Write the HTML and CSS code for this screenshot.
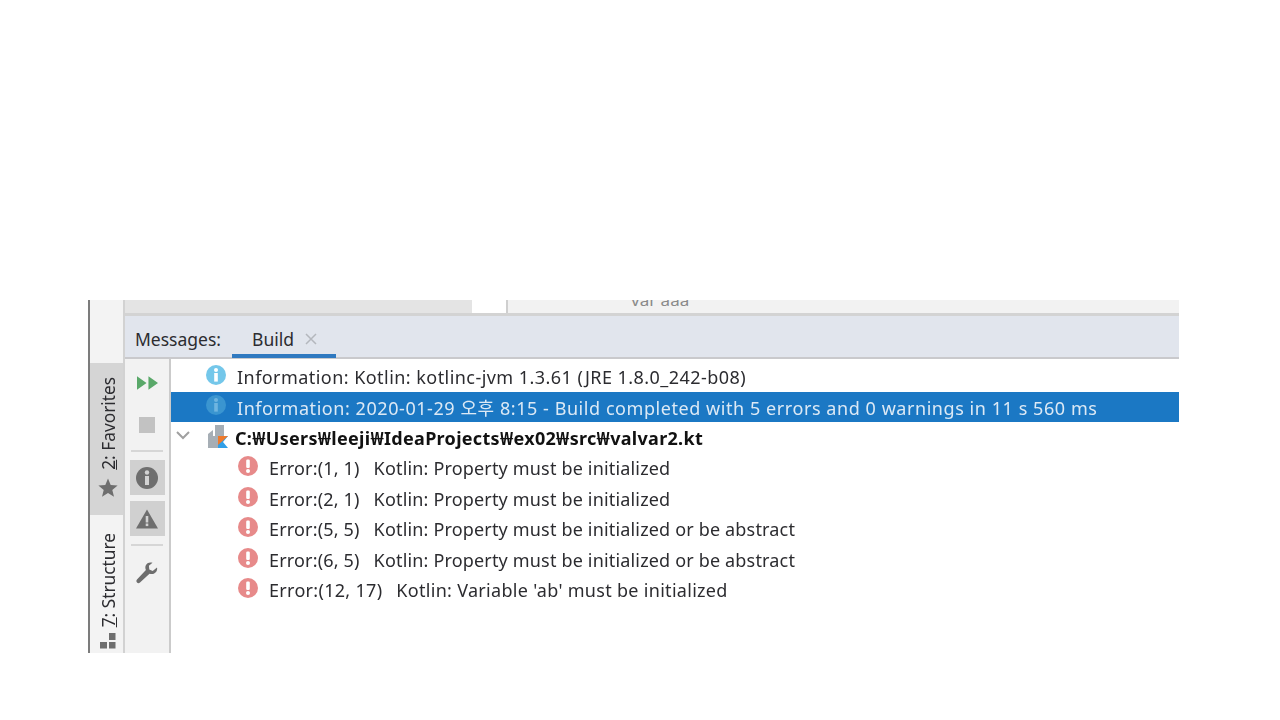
FILE: index.html
```html
<!DOCTYPE html>
<html lang="ko">
<head>
<meta charset="utf-8">
<title>Messages: Build</title>
<link rel="stylesheet" href="styles.css">
</head>
<body>
<svg class="defs" width="0" height="0" aria-hidden="true">
  <symbol id="err" viewBox="0 0 20 20"><circle cx="10" cy="10" r="10" fill="#e78a8a"/><rect x="8.200" y="3.600" width="3.600" height="8.400" rx="1.200" fill="#fff"/><circle cx="10" cy="15" r="2" fill="#fff"/></symbol>
  <symbol id="info" viewBox="0 0 20 20"><circle cx="10" cy="10" r="10" fill="currentColor"/><circle cx="10" cy="5" r="2" fill="var(--glyph, #fff)"/><rect x="8.200" y="8" width="3.600" height="8.600" fill="var(--glyph, #fff)"/></symbol>
</svg>
<div class="frame">
  <aside class="stripe">
    <div class="stripe-gap"></div>
    <div class="side-tab side-tab-active">
      <span class="side-label"><span class="mnemonic">2</span>: Favorites</span>
      <svg class="side-icon" viewBox="0 0 20 20"><path d="M10 .5l2.700 6.400 6.900.5-5.300 4.500 1.700 6.800L10 15l-6 3.700 1.700-6.800L.4 7.400l6.900-.5z" fill="#6e6e6e"/></svg>
    </div>
    <div class="side-tab side-tab-structure">
      <span class="side-label"><span class="mnemonic">7</span>: Structure</span>
      <svg class="side-icon side-icon-small" viewBox="0 0 16 16"><path d="M9 0h6.500v7H9zM0 9h7v6.500H0zM9 9h6.500v6.500H9z" fill="#6e6e6e"/></svg>
    </div>
  </aside>
  <div class="main">
    <div class="editor-strip">
      <div class="strip-left"></div>
      <div class="strip-gap"></div>
      <div class="strip-right"><span class="clipped-code">var aaa</span></div>
    </div>
    <div class="tabbar">
      <span class="tab-title">Messages:</span>
      <div class="tab"><span>Build</span><svg class="tab-close" viewBox="0 0 12 12"><path d="M1 1l10 10M11 1L1 11" stroke="#b4b7bd" stroke-width="1.500"/></svg></div>
    </div>
    <div class="content">
      <div class="tools">
        <svg class="tool-run" viewBox="0 0 22 14"><path d="M0 0l10 7-10 7zM12 0l10 7-10 7z" fill="#59a869"/></svg>
        <div class="tool-stop"></div>
        <div class="tool-sep tool-sep-a"></div>
        <div class="toggle"><svg class="tool-icon" viewBox="0 0 22 22"><circle cx="11" cy="11" r="11" fill="#6e6e6e"/><circle cx="11" cy="5.500" r="2.200" fill="#d2d2d2"/><rect x="9" y="9" width="4" height="9" fill="#d2d2d2"/></svg></div>
        <div class="toggle toggle-b"><svg class="tool-icon" viewBox="0 0 22 22"><path d="M11 1.500L22 20.500H0z" fill="#6e6e6e"/><rect x="9.700" y="8" width="2.600" height="6.500" fill="#d2d2d2"/><rect x="9.700" y="15.500" width="2.600" height="2.600" fill="#d2d2d2"/></svg></div>
        <div class="tool-sep tool-sep-b"></div>
        <svg class="tool-wrench" viewBox="0 0 22 22"><path d="M21 5.500l-4.300 3.400-3.400-1.500-.4-3.600L16.500.8C13.800-.2 10.500 1 9.600 3.800c-.5 1.500-.3 3 .3 4.300L1 17.500c-.9 1-.8 2.200 0 3s2 .9 3 0l9.500-8.800c1.400.5 2.900.6 4.300 0 2.500-1 3.900-3.600 3.200-6.200z" fill="#6e6e6e"/></svg>
      </div>
      <div class="list">
        <div class="row row-info row-plain"><svg class="msg-icon icon-info"><use href="#info"/></svg><span>Information: Kotlin: kotlinc-jvm 1.3.61 (JRE 1.8.0_242-b08)</span></div>
        <div class="row row-info row-selected"><svg class="msg-icon icon-info-dim"><use href="#info"/></svg><span>Information: 2020-01-29 오후 8:15 - Build completed with 5 errors and 0 warnings in 11 s 560 ms</span></div>
        <div class="row row-file">
          <svg class="chevron" viewBox="0 0 14 9"><path d="M1 1l6 6 6-6" fill="none" stroke="#a0a0a0" stroke-width="2"/></svg>
          <svg class="file-icon" viewBox="0 0 20 23"><path d="M0 23V9l5-4v6H7V0h9v12h-5v11z" fill="#a6aeb5"/><path d="M10 23V11h10l-5 6 5 6z" fill="#2f9fe8"/><path d="M10 11h10l-5.500 5-4.500 4z" fill="#ee7a2c"/></svg>
          <span>C:₩Users₩leeji₩IdeaProjects₩ex02₩src₩valvar2.kt</span>
        </div>
        <div class="row row-error"><svg class="msg-icon"><use href="#err"/></svg><span class="pos">Error:(1, 1)</span><span>Kotlin: Property must be initialized</span></div>
        <div class="row row-error"><svg class="msg-icon"><use href="#err"/></svg><span class="pos">Error:(2, 1)</span><span>Kotlin: Property must be initialized</span></div>
        <div class="row row-error"><svg class="msg-icon"><use href="#err"/></svg><span class="pos">Error:(5, 5)</span><span>Kotlin: Property must be initialized or be abstract</span></div>
        <div class="row row-error"><svg class="msg-icon"><use href="#err"/></svg><span class="pos">Error:(6, 5)</span><span>Kotlin: Property must be initialized or be abstract</span></div>
        <div class="row row-error row-last"><svg class="msg-icon"><use href="#err"/></svg><span class="pos">Error:(12, 17)</span><span>Kotlin: Variable 'ab' must be initialized</span></div>
      </div>
    </div>
  </div>
</div>
</body>
</html>
```
FILE: styles.css
```css
* { box-sizing: border-box; }
html, body { margin: 0; height: 100%; background: #fff; }
body {
  padding: 300px 101px 67px 88px;
  font-family: "Noto Sans", "Noto Sans CJK KR", sans-serif;
  font-size: 18px;
  color: #2c2c30;
  overflow: hidden;
}
.defs { position: absolute; }
.frame { display: flex; height: 353px; border-left: 2px solid #7c7c7c; filter: blur(0.35px); }

.stripe { width: 33px; flex: none; display: flex; flex-direction: column; background: #f3f3f3; }
.stripe-gap { height: 63px; flex: none; }
.side-tab { display: flex; flex-direction: column; align-items: center; gap: 8px; padding: 14px 0 0 3px; overflow: hidden; flex: 1; }
.side-tab-active { flex: none; height: 152px; background: #d5d5d5; }
.side-tab-structure { padding-top: 18px; gap: 6px; }
.side-label { writing-mode: vertical-rl; transform: rotate(180deg); font-size: 17.300px; line-height: 20px; white-space: nowrap; margin-left: 2px; }
.mnemonic { display: inline-block; line-height: 15px; border-left: 1px solid #2c2c30; }
.side-icon { width: 20px; height: 20px; flex: none; }
.side-icon-small { width: 16px; height: 16px; }

.main { flex: 1; min-width: 0; display: flex; flex-direction: column; border-left: 2px solid #d2d2d2; }
.editor-strip { height: 16px; flex: none; display: flex; border-bottom: 3px solid #d3d3d3; overflow: hidden; }
.strip-left { width: 347px; background: #e4e4e4; }
.strip-gap { width: 34px; background: #fff; }
.strip-right { flex: 1; background: #f2f2f2; border-left: 2px solid #cfcfcf; padding-left: 123px; }
.clipped-code { display: block; font-size: 17px; line-height: 18px; margin-top: -9px; color: #8a8a8a; }

.tabbar { height: 43px; flex: none; display: flex; align-items: stretch; padding-left: 10px; background: #e1e5ed; border-bottom: 2px solid #c9c9cc; font-size: 17.500px; }
.tab-title { align-self: center; margin-top: 4px; }
.tab { margin-left: 11px; margin-bottom: -1px; width: 104px; padding: 8px 0 0 20px; display: flex; align-items: center; gap: 11px; border-bottom: 4px solid #2f79c0; }
.tab-close { width: 12px; height: 12px; }

.content { flex: 1; display: flex; min-height: 0; }
.tools { width: 46px; flex: none; display: flex; flex-direction: column; align-items: center; background: #f2f2f2; border-right: 2px solid #cbcbcb; }
.tool-run { width: 21px; height: 14px; margin-top: 17px; flex: none; }
.tool-stop { width: 16px; height: 16px; margin-top: 27px; background: #c2c2c2; flex: none; }
.tool-sep { width: 32px; height: 2px; background: #d6d6d6; flex: none; }
.tool-sep-a { margin-top: 17px; }
.tool-sep-b { margin-top: 8px; }
.toggle { width: 35px; height: 35px; margin-top: 8px; background: #d0d0d0; display: flex; align-items: center; justify-content: center; flex: none; }
.toggle-b { margin-top: 6px; }
.tool-icon { width: 22px; height: 22px; }
.tool-wrench { width: 22px; height: 22px; margin-top: 16px; flex: none; }

.list { flex: 1; min-width: 0; padding-top: 3px; }
.row { height: 30.400px; display: flex; align-items: center; white-space: nowrap; }
.row-info { padding-left: 35px; }
.row-plain { letter-spacing: 0.45px; }
.row-selected { height: 29.400px; margin-bottom: 1px; background: #1b78c4; color: #dce9f5; letter-spacing: 0.56px; }
.row-file { padding-left: 5px; font-weight: 700; color: #111; letter-spacing: 0.3px; }
.row-error { padding-left: 67px; letter-spacing: 0.17px; }
.row-last { letter-spacing: 0.3px; }
.msg-icon { width: 20px; height: 20px; flex: none; margin: -4px 11px 0 0; }
.icon-info { color: #74c7ea; --glyph: #fff; }
.icon-info-dim { color: #3a95d0; --glyph: #6fb5e0; }
.chevron { width: 14px; height: 9px; flex: none; margin: -5px 18px 0 0; }
.file-icon { width: 20px; height: 23px; flex: none; margin: -3px 7px 0 0; }
.pos { margin-right: 14px; }
```
